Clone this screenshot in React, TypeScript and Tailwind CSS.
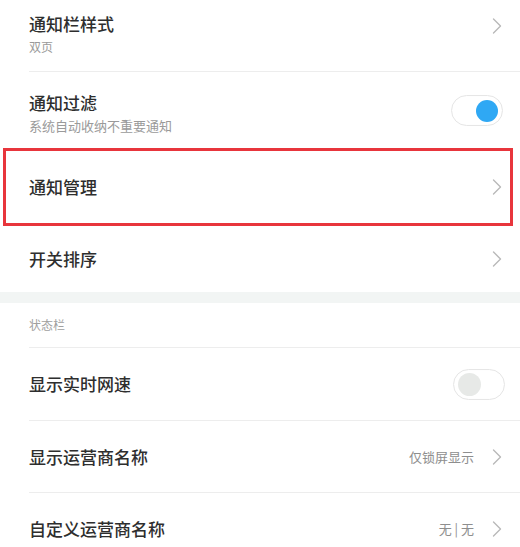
import React from "react";

function Chevron() {
  return (
    <svg width="12" height="18" viewBox="0 0 12 18" fill="none" className="shrink-0">
      <path d="M2.5 2 L9.5 9 L2.5 16" stroke="#b9b9b9" strokeWidth="1.4" strokeLinecap="round" strokeLinejoin="round" />
    </svg>
  );
}

function Toggle({ on }: { on: boolean }) {
  return (
    <div className="w-[52px] h-[31px] rounded-full border border-[#e6e6e6] bg-white flex items-center px-[4px] shadow-[inset_0_0_1px_rgba(0,0,0,0.05)]">
      {on ? (
        <div className="ml-auto w-[22px] h-[22px] rounded-full bg-[#2fa8f4]" />
      ) : (
        <div className="w-[23px] h-[23px] rounded-full bg-[#e7e9e7]" />
      )}
    </div>
  );
}

function Divider() {
  return <div className="ml-[29px] h-px bg-[#ededed]" />;
}

export default function App() {
  return (
    <div
      className="w-[520px] h-[547px] overflow-hidden bg-white text-[#2e2e2e]"
      style={{ fontFamily: '"Noto Sans CJK SC", "Noto Sans", sans-serif' }}
    >
      {/* 通知栏样式 */}
      <div className="h-[71px] pl-[29px] pr-[17px] flex items-start justify-between pt-[12px]">
        <div className="flex flex-col">
          <span className="text-[17px] leading-[24px] font-medium">通知栏样式</span>
          <span className="text-[12px] leading-[18px] mt-[2px] text-[#9a9a9a]">双页</span>
        </div>
        <div className="mt-[5px]">
          <Chevron />
        </div>
      </div>
      <Divider />

      {/* 通知过滤 */}
      <div className="h-[76px] pl-[29px] pr-[17px] flex items-start justify-between pt-[19px]">
        <div className="flex flex-col">
          <span className="text-[17px] leading-[24px] font-medium">通知过滤</span>
          <span className="text-[13px] leading-[18px] mt-[2px] text-[#9a9a9a]">系统自动收纳不重要通知</span>
        </div>
        <div className="mt-[4px]">
          <Toggle on />
        </div>
      </div>

      {/* 通知管理 */}
      <div className="relative">
        <div className="h-[78px] pl-[29px] pr-[17px] flex items-center justify-between">
          <span className="text-[17px] leading-[24px] font-medium">通知管理</span>
          <Chevron />
        </div>
        <div className="absolute left-[3px] right-[7px] top-0 bottom-0 border-[3px] border-[#e8353c]" />
      </div>

      {/* 开关排序 */}
      <div className="h-[66px] pl-[29px] pr-[17px] flex items-center justify-between pb-[1px]">
        <span className="text-[17px] leading-[24px] font-medium">开关排序</span>
        <Chevron />
      </div>

      <div className="h-[11px] bg-[#f2f5f4]" />

      {/* 状态栏 */}
      <div className="h-[44px] pl-[29px] flex items-center">
        <span className="text-[12px] text-[#a0a0a0]">状态栏</span>
      </div>
      <Divider />

      <div className="h-[72px] pl-[29px] pr-[15px] flex items-center justify-between">
        <span className="text-[17px] leading-[24px] font-medium">显示实时网速</span>
        <Toggle on={false} />
      </div>
      <Divider />

      <div className="h-[71px] pl-[29px] pr-[17px] flex items-center justify-between">
        <span className="text-[17px] leading-[24px] font-medium">显示运营商名称</span>
        <div className="flex items-center gap-[17px]">
          <span className="text-[13px] text-[#8e8e8e]">仅锁屏显示</span>
          <Chevron />
        </div>
      </div>
      <Divider />

      <div className="h-[71px] pl-[29px] pr-[17px] flex items-center justify-between">
        <span className="text-[17px] leading-[24px] font-medium">自定义运营商名称</span>
        <div className="flex items-center gap-[17px]">
          <span className="text-[13px] text-[#8e8e8e]">无 | 无</span>
          <Chevron />
        </div>
      </div>
    </div>
  );
}
